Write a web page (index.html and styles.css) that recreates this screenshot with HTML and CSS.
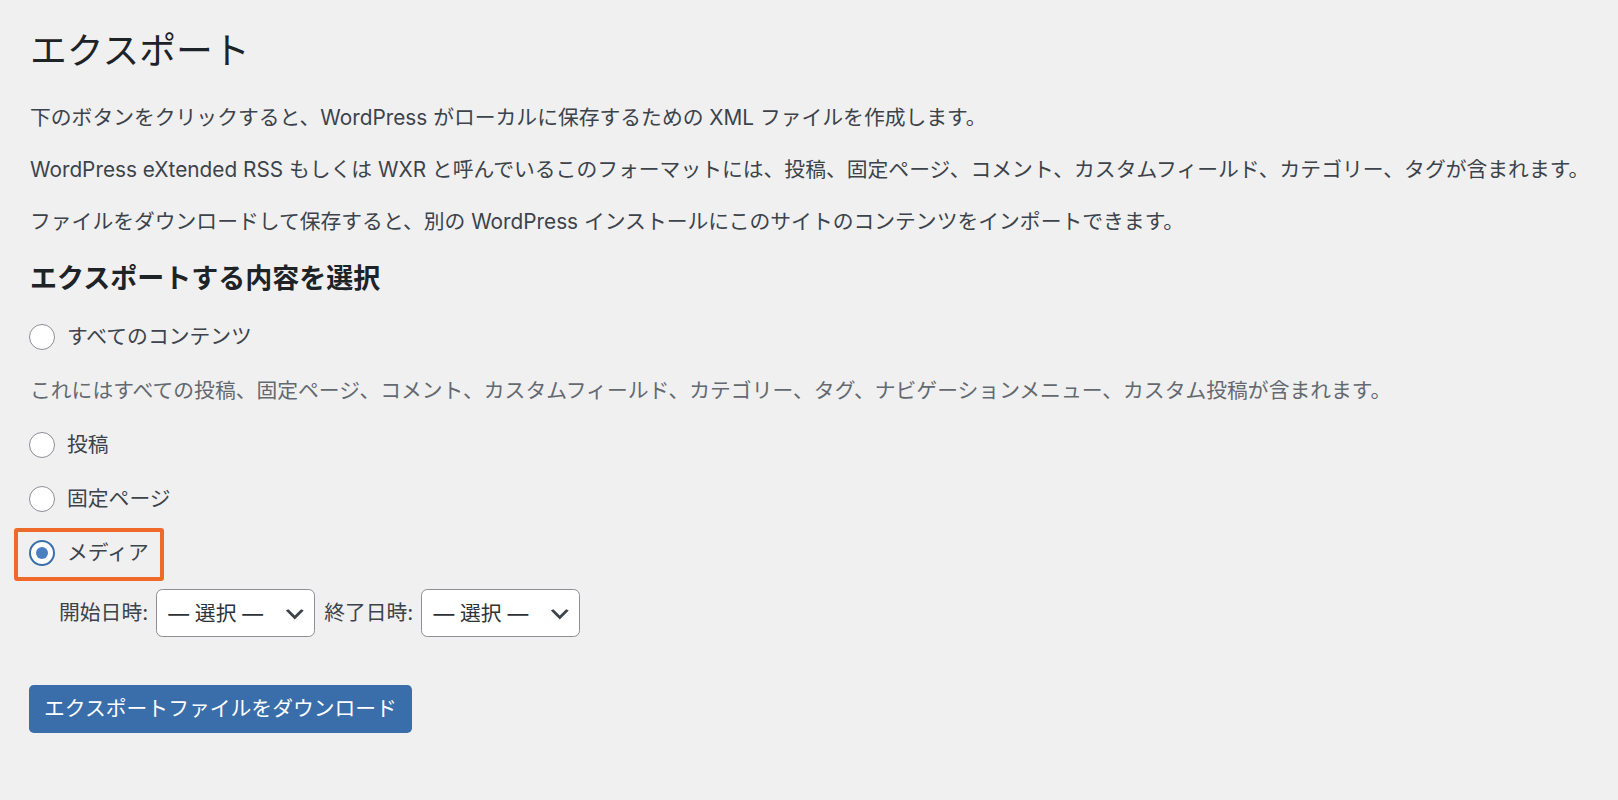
FILE: index.html
```html
<!DOCTYPE html>
<html lang="ja">
<head>
<meta charset="utf-8">
<title>エクスポート</title>
<link rel="stylesheet" href="styles.css">
</head>
<body>
<div class="wrap">
  <h1 class="page-title">エクスポート</h1>
  <p class="text">下のボタンをクリックすると、WordPress がローカルに保存するための XML ファイルを作成します。</p>
  <p class="text">WordPress eXtended RSS もしくは WXR と呼んでいるこのフォーマットには、投稿、固定ページ、コメント、カスタムフィールド、カテゴリー、タグが含まれます。</p>
  <p class="text">ファイルをダウンロードして保存すると、別の WordPress インストールにこのサイトのコンテンツをインポートできます。</p>

  <h2 class="section-title">エクスポートする内容を選択</h2>

  <form class="export-form">
    <p class="option first"><label class="choice"><input class="radio" type="radio" name="content" value="all"><span>すべてのコンテンツ</span></label></p>
    <p class="option description">これにはすべての投稿、固定ページ、コメント、カスタムフィールド、カテゴリー、タグ、ナビゲーションメニュー、カスタム投稿が含まれます。</p>
    <p class="option"><label class="choice"><input class="radio" type="radio" name="content" value="posts"><span>投稿</span></label></p>
    <p class="option"><label class="choice"><input class="radio" type="radio" name="content" value="pages"><span>固定ページ</span></label></p>
    <p class="option"><label class="choice highlight"><input class="radio" type="radio" name="content" value="attachment" checked><span>メディア</span></label></p>

    <div class="filters">
      <label class="filter-label" for="start">開始日時:</label>
      <span class="select-wrap">
        <select id="start" class="date-select"><option>— 選択 —</option></select>
        <svg class="chevron" viewBox="0 0 20 20" aria-hidden="true"><path d="M5 6l5 5 5-5 2 1-7 7-7-7 2-1z"/></svg>
      </span>
      <label class="filter-label" for="end">終了日時:</label>
      <span class="select-wrap">
        <select id="end" class="date-select"><option>— 選択 —</option></select>
        <svg class="chevron" viewBox="0 0 20 20" aria-hidden="true"><path d="M5 6l5 5 5-5 2 1-7 7-7-7 2-1z"/></svg>
      </span>
    </div>

    <div class="submit-row">
      <button type="button" class="button-primary">エクスポートファイルをダウンロード</button>
    </div>
  </form>
</div>
</body>
</html>
```

FILE: styles.css
```css
html, body {
  margin: 0;
  padding: 0;
  background: #f0f0f1;
}

body {
  font-family: Inter, "Noto Sans CJK JP", sans-serif;
  font-size: 20.8px;
  color: #3c434a;
  min-height: 800px;
}

.wrap {
  padding: 27px 20px 0 29px;
}

.page-title {
  margin: 0;
  font-size: 36.8px;
  font-weight: 400;
  line-height: 48px;
  color: #1d2327;
  padding-left: 1px;
}

.text {
  margin: 0 0 20px;
  line-height: 32px;
  padding-left: 1px;
}

.page-title + .text {
  margin-top: 27px;
}

.section-title {
  margin: 23px 0 0;
  font-size: 27px;
  font-weight: 700;
  line-height: 36px;
  color: #1d2327;
  padding-left: 1px;
}

.export-form {
  margin: 0;
}

.option {
  display: flex;
  align-items: center;
  height: 32px;
  margin: 22px 0 0;
  line-height: 32px;
}

.option.first {
  margin-top: 24px;
}

.description {
  display: block;
  color: #646970;
  padding-left: 1px;
}

.choice {
  display: flex;
  align-items: center;
  position: relative;
  height: 32px;
}

.radio {
  appearance: none;
  -webkit-appearance: none;
  margin: 0 12px 0 0;
  width: 26px;
  height: 26px;
  border: 1.6px solid #8c8f94;
  border-radius: 50%;
  background: #fff;
  box-sizing: border-box;
  display: inline-flex;
  align-items: center;
  justify-content: center;
  flex: none;
}

.radio:checked {
  border: 2.4px solid #3a6faa;
}

.radio:checked::before {
  content: "";
  width: 12px;
  height: 12px;
  border-radius: 50%;
  background: #4a80c0;
}

.highlight::after {
  content: "";
  position: absolute;
  top: -9px;
  right: -15px;
  bottom: -12px;
  left: -15px;
  border: 4.5px solid #ef6a2a;
  border-radius: 3px;
  pointer-events: none;
}

.filters {
  display: flex;
  align-items: center;
  gap: 8px;
  margin: 20px 0 0;
  padding-left: 30px;
}

.filter-label {
  line-height: 32px;
}

.select-wrap {
  position: relative;
  display: inline-flex;
  margin-right: 1px;
}

.date-select {
  appearance: none;
  -webkit-appearance: none;
  width: 159px;
  height: 48px;
  box-sizing: border-box;
  border: 1.6px solid #8c8f94;
  border-radius: 6.4px;
  background: #fff;
  font-family: Inter, "Noto Sans CJK JP", sans-serif;
  font-size: 20.8px;
  color: #2c3338;
  padding: 0 38px 0 11px;
  margin: 0;
}

.chevron {
  position: absolute;
  right: 8px;
  top: 50%;
  width: 25.6px;
  height: 25.6px;
  transform: translateY(-45%);
  fill: #3c434a;
  pointer-events: none;
}

.submit-row {
  margin-top: 48px;
}

.button-primary {
  height: 48px;
  padding: 0 15px;
  border: none;
  border-radius: 4.8px;
  background: #3a6eaa;
  color: #fff;
  font-family: Inter, "Noto Sans CJK JP", sans-serif;
  font-size: 20.8px;
  line-height: 48px;
  cursor: pointer;
}
```
